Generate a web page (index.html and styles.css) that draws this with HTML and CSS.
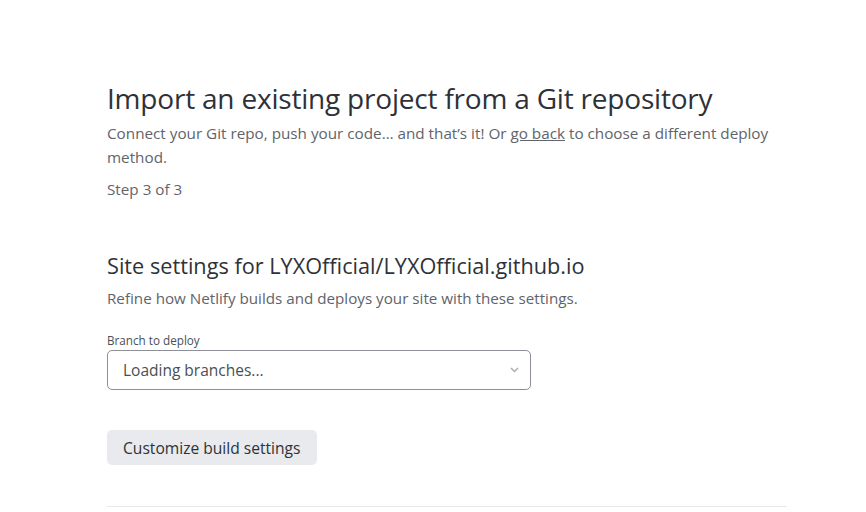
FILE: index.html
```html
<!DOCTYPE html>
<html>
<head>
<meta charset="utf-8">
<link rel="stylesheet" href="styles.css">
</head>
<body>
<main class="page">
  <header class="intro">
    <h1 class="title">Import an existing project from a Git repository</h1>
    <p class="lead">Connect your Git repo, push your code… and that’s it! Or <a class="link" href="#">go back</a> to choose a different deploy method.</p>
    <p class="step">Step 3 of 3</p>
  </header>
  <section class="settings">
    <h2 class="subtitle">Site settings for LYXOfficial/LYXOfficial.github.io</h2>
    <p class="desc">Refine how Netlify builds and deploys your site with these settings.</p>
    <label class="field-label">Branch to deploy</label>
    <div class="select">
      <span class="select-text">Loading branches...</span>
      <svg class="chev" width="9" height="6" viewBox="0 0 9 6"><path d="M1 1l3.5 3.5 3.5-3.5" fill="none" stroke="#a9adb1" stroke-width="1.5"/></svg>
    </div>
    <button class="btn">Customize build settings</button>
  </section>
  <hr class="divider">
</main>
</body>
</html>
```
FILE: styles.css
```css
html, body { margin: 0; padding: 0; background: #fff; }
body { font-family: "Open Sans", "Noto Sans", sans-serif; color: #2e3238; }
.page { width: 680px; padding: 79px 0 0 107px; }
.title { margin: 0; font-size: 28px; font-weight: 400; line-height: 38px; color: #2e3238; letter-spacing: -0.2px; }
.lead { margin: 4px 0 0; font-size: 15.25px; line-height: 24px; color: #5f646a; }
.link { color: #5f646a; text-decoration: underline; }
.step { margin: 8px 0 0; font-size: 15.25px; line-height: 24px; color: #5f646a; }
.settings { margin-top: 50px; display: flex; flex-direction: column; align-items: flex-start; }
.subtitle { margin: 0; font-size: 21.7px; font-weight: 400; line-height: 30px; color: #2e3238; }
.desc { margin: 6px 0 0; font-size: 15.2px; line-height: 22px; color: #5f646a; }
.field-label { margin-top: 24px; font-size: 11.7px; line-height: 14px; color: #4a4f55; }
.select { margin-top: 3px; height: 38px; border: 1px solid #8d9197; border-radius: 5px; display: flex; align-items: center; justify-content: space-between; padding: 0 11px 0 15px; box-sizing: content-box; width: 396px; }
.select-text { font-size: 15.5px; color: #4a4f55; }
.btn { margin-top: 40px; height: 35px; padding: 0 16px; border: none; border-radius: 5px; background: #e8eaed; font-family: inherit; font-size: 15.6px; color: #2e3238; }
.divider { margin: 41px 0 0; border: 0; border-top: 1px solid #e6e8ea; width: 680px; }
```
